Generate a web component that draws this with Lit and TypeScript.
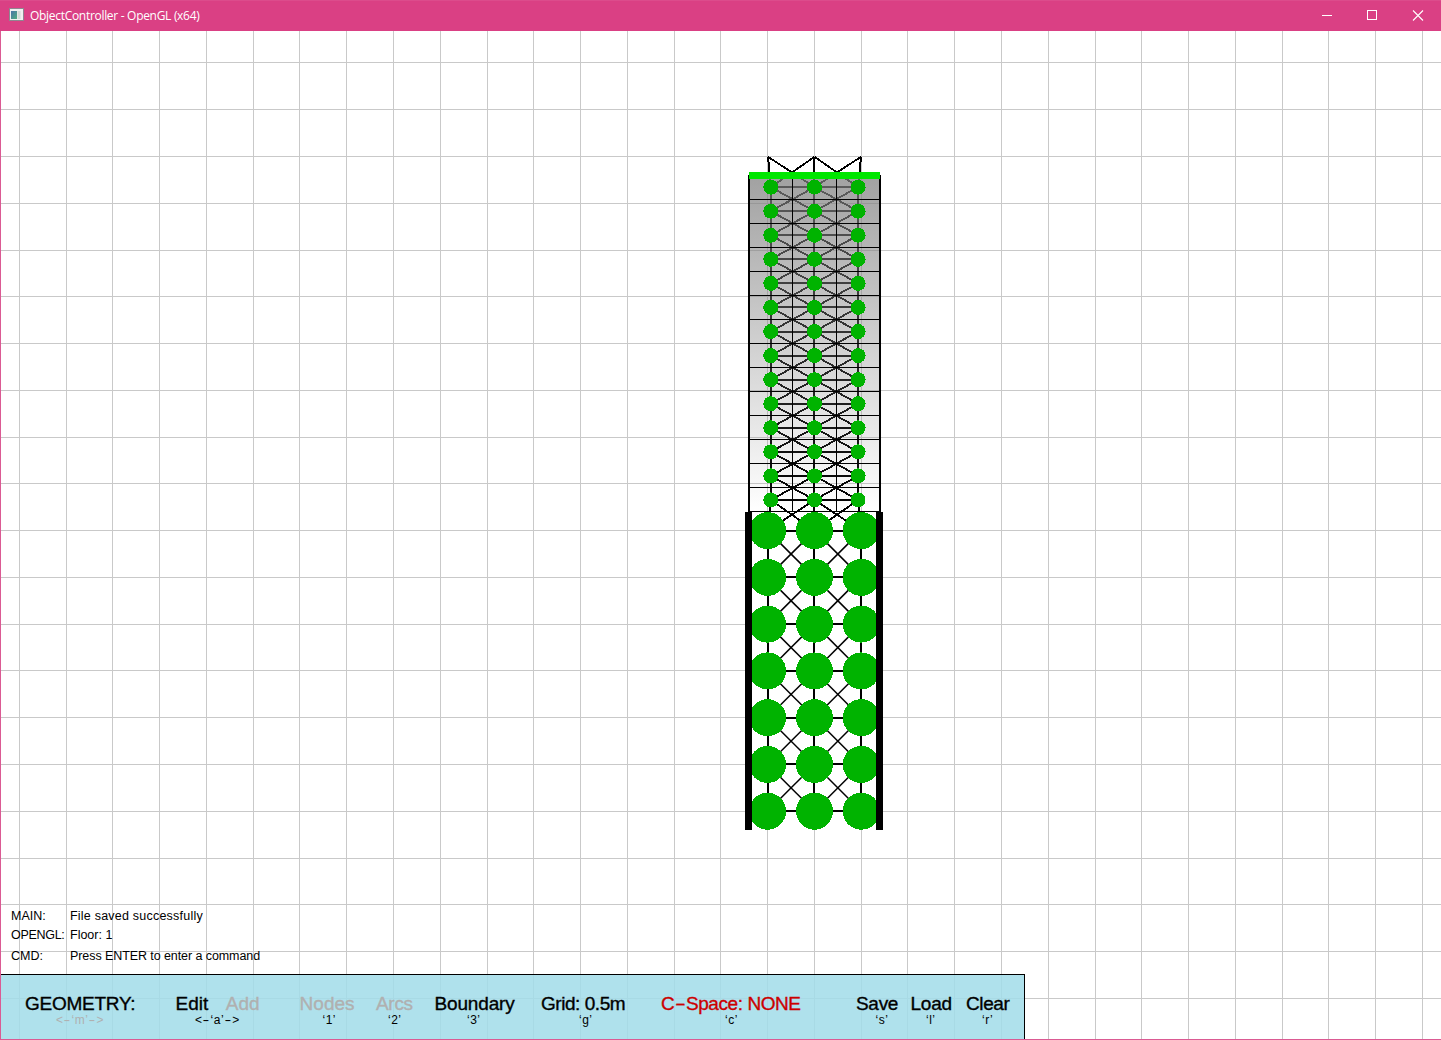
import { LitElement, html, css, svg } from "lit";
import { customElement } from "lit/decorators.js";

type Title = { text: string; tone?: string; spacing?: number; gap?: number };
type Command = { titles: Title[]; key: string; keyTone?: string; indent: number };

const COMMANDS: Command[] = [
  { titles: [{ text: "GEOMETRY:", spacing: -0.25 }], key: "<-‘m’->", keyTone: "dim", indent: 31 },
  { titles: [{ text: "Edit", gap: 0.5 }, { text: "Add", tone: "dim", gap: 17.5 }], key: "<-‘a’->", indent: 20 },
  { titles: [{ text: "Nodes", tone: "dim", gap: 0.6 }], key: "‘1’", indent: 23.5 },
  { titles: [{ text: "Arcs", tone: "dim", spacing: -0.3 }], key: "‘2’", indent: 12 },
  { titles: [{ text: "Boundary", spacing: -0.15, gap: 0.5 }], key: "‘3’", indent: 33 },
  { titles: [{ text: "Grid: 0.5m", spacing: -0.45 }], key: "‘g’", indent: 38 },
  { titles: [{ text: "C-Space: NONE", tone: "red", spacing: -0.42 }], key: "‘c’", indent: 64 },
  { titles: [{ text: "Save", spacing: -0.3 }], key: "‘s’", indent: 19.5 },
  { titles: [{ text: "Load", spacing: -0.2, gap: 0.5 }], key: "‘l’", indent: 16 },
  { titles: [{ text: "Clear", spacing: -0.4 }], key: "‘r’", indent: 16 },
];

const LOG = [
  { source: "MAIN:", message: "File saved successfully", cls: "l1" },
  { source: "OPENGL:", message: "Floor: 1", cls: "l2" },
  { source: "CMD:", message: "Press ENTER to enter a command", cls: "l3" },
];

const PITCH = 46.77;
const GRID_X = Array.from({ length: 31 }, (_, i) => Math.floor(19.32 + i * PITCH));
const GRID_Y = Array.from({ length: 21 }, (_, i) => Math.floor(62.95 + i * PITCH));

const WIDE_X = [768, 814, 861];
const NEAR_X = [771, 814, 858];
type Row = { y: number; cy: number; xs: number[]; cxs: number[] };
const UPPER: Row[] = Array.from({ length: 14 }, (_, i) => {
  const y = 187.15 + i * 24.06;
  return { y: Math.round(y), cy: y, xs: NEAR_X, cxs: [770.8, 814.5, 858.1] };
});
const LOWER: Row[] = Array.from({ length: 7 }, (_, i) => {
  const y = 530.6 + i * PITCH;
  return { y: Math.round(y), cy: y, xs: WIDE_X, cxs: [767.6, 814.5, 861.2] };
});
const APEX: Row = { y: 157, cy: 156.8, xs: WIDE_X, cxs: [768, 814.5, 861] };

const seg = (x1: number, y1: number, x2: number, y2: number, cls: string) =>
  svg`<line class=${cls} x1=${x1} y1=${y1} x2=${x2} y2=${y2}></line>`;

const link = (a: Row, b: Row, cls: string) => [
  ...a.xs.map((x, i) => seg(x, a.y, b.xs[i], b.y, "arc")),
  ...[0, 1].flatMap((i) => [
    seg(a.cxs[i], a.cy, b.cxs[i + 1], b.cy, cls),
    seg(a.cxs[i + 1], a.cy, b.cxs[i], b.cy, cls),
  ]),
];

const chain = (rows: Row[], cls: string) => rows.slice(1).flatMap((r, i) => link(rows[i], r, cls));
const rungs = (rows: Row[]) => rows.map((r) => seg(r.xs[0], r.y, r.xs[2], r.y, "arc"));
const nodes = (rows: Row[], r: number) =>
  rows.flatMap((row) => row.cxs.map((x) => svg`<circle class="node" cx=${x} cy=${row.cy} r=${r}></circle>`));

@customElement("app-root")
export class AppRoot extends LitElement {
  static styles = css`
    :host {
      display: block;
      width: 1441px;
      height: 1040px;
      overflow: hidden;
      background: #fff;
    }
    .window {
      display: flex;
      flex-direction: column;
      height: 1040px;
      box-sizing: border-box;
      border-bottom: 1px solid #db5a93;
    }
    .titlebar {
      display: flex;
      align-items: center;
      height: 31px;
      flex: none;
      box-sizing: border-box;
      border-top: 1px solid #dc4c8c;
      background: #da4084;
      color: #fff;
      padding-left: 9px;
    }
    .name {
      flex: 1;
      margin-left: 5px;
      font: 12px/30px "Open Sans", "Noto Sans", sans-serif;
      letter-spacing: -0.3px;
    }
    .app-icon { display: block; width: 16px; height: 14px; margin-top: -2px; }
    .controls { display: flex; margin-top: -2px; }
    .controls svg { display: block; width: 45px; height: 29px; }
    .controls svg:last-child { width: 46px; }
    .canvas {
      position: relative;
      flex: 1;
      border-left: 1px solid #db5a93;
      display: flex;
      flex-direction: column;
      justify-content: flex-end;
    }
    .scene {
      position: absolute;
      left: -1px;
      top: -31px;
      width: 1441px;
      height: 1040px;
      clip-path: inset(31px 0 1px 1px);
    }
    .cell { fill: #c9c9c9; shape-rendering: crispEdges; }
    .arc { stroke: #000; stroke-width: 2; shape-rendering: crispEdges; }
    .brace { stroke: #000; stroke-width: 1.85; shape-rendering: crispEdges; }
    .cross { stroke: #000; stroke-width: 1.5; }
    .node { fill: #00b300; shape-rendering: crispEdges; }
    .solid { fill: #000; shape-rendering: crispEdges; }
    .lid { fill: #00e600; shape-rendering: crispEdges; }
    .log {
      position: relative;
      display: grid;
      grid-template-columns: 59px auto;
      grid-template-rows: 20px 20px 20px;
      margin: 0 0 8px 10px;
      font: 12.5px/20px "Liberation Sans", Arial, sans-serif;
      color: #000;
    }
    .src, .msg { white-space: nowrap; }
    .l2 { margin-top: -1px; }
    .l1.msg { letter-spacing: 0.22px; }
    .l2.src { letter-spacing: -0.3px; }
    .l3.msg { letter-spacing: -0.08px; }
    .panel {
      position: relative;
      width: 1024px;
      height: 65px;
      box-sizing: border-box;
      border-top: 1px solid #000;
      border-right: 1px solid #000;
      background: rgba(163, 221, 233, 0.87);
      display: grid;
      grid-template-columns: 150px 124px 77px 58px 107px 120px 195px 54px 56px auto;
      padding: 18px 0 0 24px;
      font-family: "Liberation Sans", Arial, sans-serif;
      color: #000;
      white-space: nowrap;
    }
    .titles {
      display: flex;
      font-size: 19px;
      line-height: 21px;
      height: 21px;
      -webkit-text-stroke: 0.35px currentColor;
    }
    .key { font-size: 12px; line-height: 14px; margin-top: -1px; letter-spacing: 0.5px; }
    .dim { color: #b0b0b0; }
    .red { color: #cc0000; }
    .dash { display: inline-block; transform: scaleX(1.7); margin: 0 0.15em; }
  `;

  private dashed(text: string) {
    return text.split(/(-)/).map((p) => (p === "-" ? html`<span class="dash">-</span>` : p));
  }

  private scene() {
    return html`<svg class="scene" viewBox="0 0 1441 1040">
      <defs>
        <linearGradient id="shade" x1="0" y1="0" x2="0" y2="1">
          <stop offset="0" stop-color="#808080" stop-opacity="0.74"></stop>
          <stop offset="1" stop-color="#808080" stop-opacity="0"></stop>
        </linearGradient>
      </defs>
      ${GRID_X.map((x) => svg`<rect class="cell" x=${x} y="31" width="1" height="1008"></rect>`)}
      ${GRID_Y.map((y) => svg`<rect class="cell" x="1" y=${y} width="1440" height="1"></rect>`)}
      ${link(APEX, UPPER[0], "brace")} ${chain(UPPER, "brace")} ${rungs(UPPER)}
      ${link(UPPER[13], LOWER[0], "brace")} ${chain(LOWER, "cross")} ${rungs(LOWER)}
      <rect x="749" y="175" width="131" height="337" fill="url(#shade)"></rect>
      ${Array.from({ length: 14 }, (_, i) => svg`<rect class="solid" x="749" y=${199 + i * 24} width="131" height="1"></rect>`)}
      <rect class="solid" x="792" y="175" width="1" height="337"></rect>
      <rect class="solid" x="836" y="175" width="1" height="337"></rect>
      ${nodes(UPPER, 7.5)} ${nodes(LOWER, 18.5)}
      <rect class="solid" x="748" y="175" width="2" height="337"></rect>
      <rect class="solid" x="879" y="175" width="2" height="337"></rect>
      <rect class="solid" x="745" y="512" width="7" height="318"></rect>
      <rect class="solid" x="876" y="512" width="7" height="318"></rect>
      <rect class="lid" x="749" y="172" width="131" height="7"></rect>
    </svg>`;
  }

  render() {
    return html`<div class="window">
      <div class="titlebar">
        <svg class="app-icon" viewBox="0 0 16 14">
          <defs>
            <linearGradient id="glass" x1="0" y1="0" x2="1" y2="1">
              <stop offset="0" stop-color="#4a74a8"></stop>
              <stop offset="1" stop-color="#4fae7f"></stop>
            </linearGradient>
          </defs>
          <rect x="0.5" y="0.5" width="14" height="12" fill="#f0f0f0" stroke="#8f8690"></rect>
          <rect x="2" y="3" width="6" height="8" fill="url(#glass)"></rect>
          <rect x="8.5" y="3" width="3" height="8" fill="#d3dad6"></rect>
        </svg>
        <span class="name">ObjectController - OpenGL (x64)</span>
        <div class="controls">
          <svg viewBox="0 0 45 29"><path d="M17 14.5h10" stroke="#fff" fill="none"></path></svg>
          <svg viewBox="0 0 45 29"><rect x="17.5" y="9.5" width="9" height="9" stroke="#fff" fill="none"></rect></svg>
          <svg viewBox="0 0 46 29"><path d="M18 9.5l10 10M28 9.5l-10 10" stroke="#fff" stroke-width="1.1" fill="none"></path></svg>
        </div>
      </div>
      <div class="canvas">
        ${this.scene()}
        <div class="log">
          ${LOG.map((l) => html`<span class="src ${l.cls}">${l.source}</span><span class="msg ${l.cls}">${l.message}</span>`)}
        </div>
        <div class="panel">
          ${COMMANDS.map(
            (c) => html`<div class="command">
              <div class="titles">
                ${c.titles.map(
                  (t) => html`<div class="title ${t.tone ?? ""}" style="letter-spacing:${t.spacing ?? 0}px;margin-left:${t.gap ?? 0}px">${this.dashed(t.text)}</div>`
                )}
              </div>
              <div class="key ${c.keyTone ?? ""}" style="padding-left:${c.indent}px">${this.dashed(c.key)}</div>
            </div>`
          )}
        </div>
      </div>
    </div>`;
  }
}
